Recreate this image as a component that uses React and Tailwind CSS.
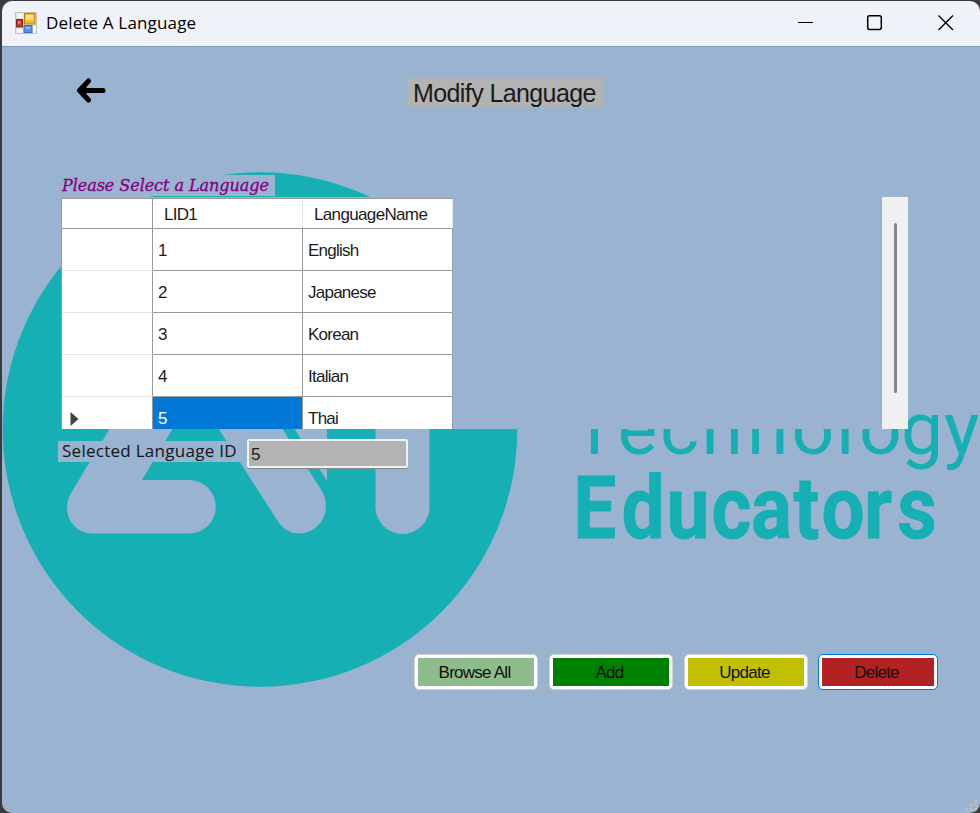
const languages = [
  { id: "1", name: "English" },
  { id: "2", name: "Japanese" },
  { id: "3", name: "Korean" },
  { id: "4", name: "Italian" },
  { id: "5", name: "Thai", selected: true },
];

function AppIcon() {
  return (
    <svg width="22" height="22" viewBox="0 0 22 22" className="shrink-0">
      <rect x="0.5" y="0.5" width="21" height="21" fill="#e4e4e8" stroke="#c3c3c6" />
      <rect x="2" y="2" width="5" height="4" fill="#f4f5fa" />
      <rect x="2" y="17" width="5" height="3.500" fill="#fafafe" />
      <rect x="18" y="14" width="2.500" height="6.500" fill="#fafafe" />
      <rect x="9.500" y="1.500" width="10.500" height="10.500" fill="#f3bf28" stroke="#a88419" />
      <rect x="11" y="3" width="7" height="5" fill="#ffdf78" />
      <rect x="1.500" y="7.500" width="6" height="7.500" fill="#c53427" stroke="#8f2218" />
      <rect x="3" y="9.500" width="2.500" height="2" fill="#f3a08f" />
      <rect x="9" y="13.500" width="8" height="7" fill="#5a8fe6" stroke="#3c6dc4" />
      <rect x="10.500" y="15" width="5" height="2" fill="#8fb6f5" />
    </svg>
  );
}

function TitleBar() {
  return (
    <header className="flex h-[46px] shrink-0 items-center border-b border-[#7f9ab8] bg-[#f0f2fa] pb-[2px] pl-[13px] pr-[26px]">
      <AppIcon />
      <h1 className="ml-[9px] whitespace-nowrap font-['Open_Sans',sans-serif] text-[17px] leading-6 tracking-[0.16px] text-black">
        Delete A Language
      </h1>
      <svg width="156" height="16" viewBox="0 0 156 16" className="ml-auto" fill="none" stroke="#000">
        <path d="M0 7.500h15" strokeWidth="1.100" />
        <rect x="69.700" y="0.800" width="13.600" height="13.600" rx="1.800" strokeWidth="1.500" />
        <path d="M140.500 0.500l14.500 14.500M155 0.500L140.500 15" strokeWidth="1.400" />
      </svg>
    </header>
  );
}

function Backdrop() {
  return (
    <svg
      className="absolute left-0 top-0"
      width="978"
      height="766"
      viewBox="2 47 978 766"
      fill="#15afb4"
    >
      <circle cx="260" cy="429.500" r="257.300" />
      <g fill="#99b3d1">
        <path d="M110 428H173L142 480H189A26.700 26.700 0 0 1 189 533.500H93C73 533.500 60 513 71 493Z" />
        <path d="M218 428H282L322.500 492C333 513 318 533.500 299 533.500C290 533.500 283 529 277 520Z" />
        <path d="M294 428H327V481Z" />
        <path d="M375.500 428H429.500V507A27 27 0 0 1 375.500 507Z" />
      </g>
      <text
        x="572 617.500 660 701.500 747 791.500 836 859 901 944"
        y="453.500"
        fontFamily="Roboto, sans-serif"
        fontSize="75"
        fontWeight="400"
      >
        Technology
      </text>
      <text
        transform="scale(0.88 1)"
        x="651.500 706.300 757.300 808.500 853.500 901.700 933.500 981.800 1019.500"
        y="538"
        fontFamily="Roboto, sans-serif"
        fontSize="87"
        fontWeight="700"
        stroke="#15afb4"
        strokeWidth="0.800"
      >
        Educators
      </text>
    </svg>
  );
}

function LanguageGrid() {
  return (
    <div className="flex h-[232px] w-[847px] justify-between overflow-hidden bg-[#99b3d1] font-['Liberation_Sans',sans-serif] text-[17px] text-[#1c1c1c]">
      <div className="mt-px w-[392px] border-l border-t border-[#999]">
        <div className="flex h-[30px] border-b border-[#999] bg-white leading-[31px]">
          <div className="w-[91px] border-r border-[#999]" />
          <div className="w-[150px] border-r border-[#e5e5e5] pl-[11px] tracking-[-0.700px]">LID1</div>
          <div className="flex-1 border-r border-[#e5e5e5] pl-[11px] tracking-[-0.650px]">LanguageName</div>
        </div>
        {languages.map((row) => (
          <div key={row.id} className="flex h-[42px] bg-white leading-[44px]">
            <div className="flex w-[91px] items-center border-b border-r border-b-[#e5e5e5] border-r-[#999] pl-2">
              {row.selected && (
                <svg width="9" height="14" viewBox="0 0 9 14" className="mt-[2px]">
                  <path d="M0.500 0L8.500 7L0.500 14Z" fill="#444" />
                </svg>
              )}
            </div>
            <div
              className={
                row.selected
                  ? "w-[150px] border-b border-r border-[#999] bg-[#0078d7] pl-[5px] text-white"
                  : "w-[150px] border-b border-r border-[#999] pl-[5px]"
              }
            >
              {row.id}
            </div>
            <div className="flex-1 border-b border-r border-[#999] pl-[5px] tracking-[-0.750px]">
              {row.name}
            </div>
          </div>
        ))}
      </div>
      <div className="w-[26px] bg-[#f0f0f0] pt-[26px]">
        <div className="ml-3 h-[170px] w-[3px] rounded-full bg-[#868686]" />
      </div>
    </div>
  );
}

const buttonBase =
  "h-[36px] rounded-[5px] border bg-white p-[3px] font-['Liberation_Sans',sans-serif] text-[17px] tracking-[-0.750px] text-[#101010]";

function Actions() {
  return (
    <div className="ml-[412px] mt-[184px] flex gap-[11px]">
      <button className={`${buttonBase} w-[124px] border-[#d0d0d0]`}>
        <span className="flex h-full items-center justify-center bg-[#8fbc8b] pr-[3px] pt-[2px]">Browse All</span>
      </button>
      <button className={`${buttonBase} w-[124px] border-[#d0d0d0]`}>
        <span className="flex h-full items-center justify-center bg-[#008000] pr-[3px] pt-[2px]">Add</span>
      </button>
      <button className={`${buttonBase} w-[124px] border-[#d0d0d0]`}>
        <span className="flex h-full items-center justify-center bg-[#c0c000] pr-[3px] pt-[2px]">Update</span>
      </button>
      <button className={`${buttonBase} -ml-px w-[120px] border-[#0078d7]`}>
        <span className="flex h-full items-center justify-center bg-[#b22222] pr-[3px] pt-[2px]">Delete</span>
      </button>
    </div>
  );
}

export default function App() {
  return (
    <div className="h-[813px] w-[980px] overflow-hidden bg-[#3b3b3d] pl-[2px] pt-px">
      <div className="flex h-[812px] w-[978px] flex-col overflow-hidden rounded-[10px]">
        <TitleBar />
        <main className="relative flex-1 bg-[#99b3d1]">
          <Backdrop />
          <div className="relative">
            <div className="flex h-[128px] items-start">
              <svg width="30" height="26" viewBox="0 0 30 26" className="ml-[74px] mt-[31px] shrink-0" fill="none" stroke="#000" strokeWidth="5" strokeLinecap="round" strokeLinejoin="round">
                <path d="M12.500 3L3.500 12.500L12.500 22M4 12.500H27" />
                <path d="M4 12.500L9 8V17Z" fill="#000" strokeWidth="3" />
              </svg>
              <h2 className="ml-[301px] mt-[30px] h-[30px] w-[196px] whitespace-nowrap bg-[#b3b3b3] pl-[6px] font-['Liberation_Sans',sans-serif] text-[25px] leading-[32px] tracking-[-0.600px] text-[#1a1a1a]">
                Modify Language
              </h2>
            </div>
            <p className="ml-[59px] h-[21px] w-[214px] whitespace-nowrap bg-[#99b3d1] pl-px font-['DejaVu_Serif',serif] text-[16px] italic leading-[22px] tracking-[-0.050px] text-[#800080] [-webkit-text-stroke:0.3px_#800080]">
              Please Select a Language
            </p>
            <div className="ml-[59px] mt-px">
              <LanguageGrid />
            </div>
            <div className="ml-[56px] flex h-[41px] items-start pt-[10px]">
              <label className="mt-[2px] h-[21px] w-[183px] whitespace-nowrap bg-[#99b3d1] pl-[4px] font-['Open_Sans',sans-serif] text-[17px] leading-[20px] tracking-[0.270px] text-[#151515]">
                Selected Language ID
              </label>
              <div className="ml-[6px] h-[29px] w-[161px] rounded-[2px] border-2 border-[#f2f2f2] bg-[#b3b3b3] pl-[2px] font-['Liberation_Sans',sans-serif] text-[17px] leading-[27px] text-[#1a1a1a] shadow-[0_1px_0_#888]">
                5
              </div>
            </div>
            <Actions />
          </div>
          <svg className="absolute bottom-[2px] right-[3px]" width="12" height="12" viewBox="0 0 12 12" fill="#bcbcbc">
            <path d="M9 0h3v3h-3zM9 4.500h3v3h-3zM4.500 4.500h3v3h-3zM9 9h3v3h-3zM4.500 9h3v3h-3zM0 9h3v3h-3z" />
          </svg>
        </main>
      </div>
    </div>
  );
}
